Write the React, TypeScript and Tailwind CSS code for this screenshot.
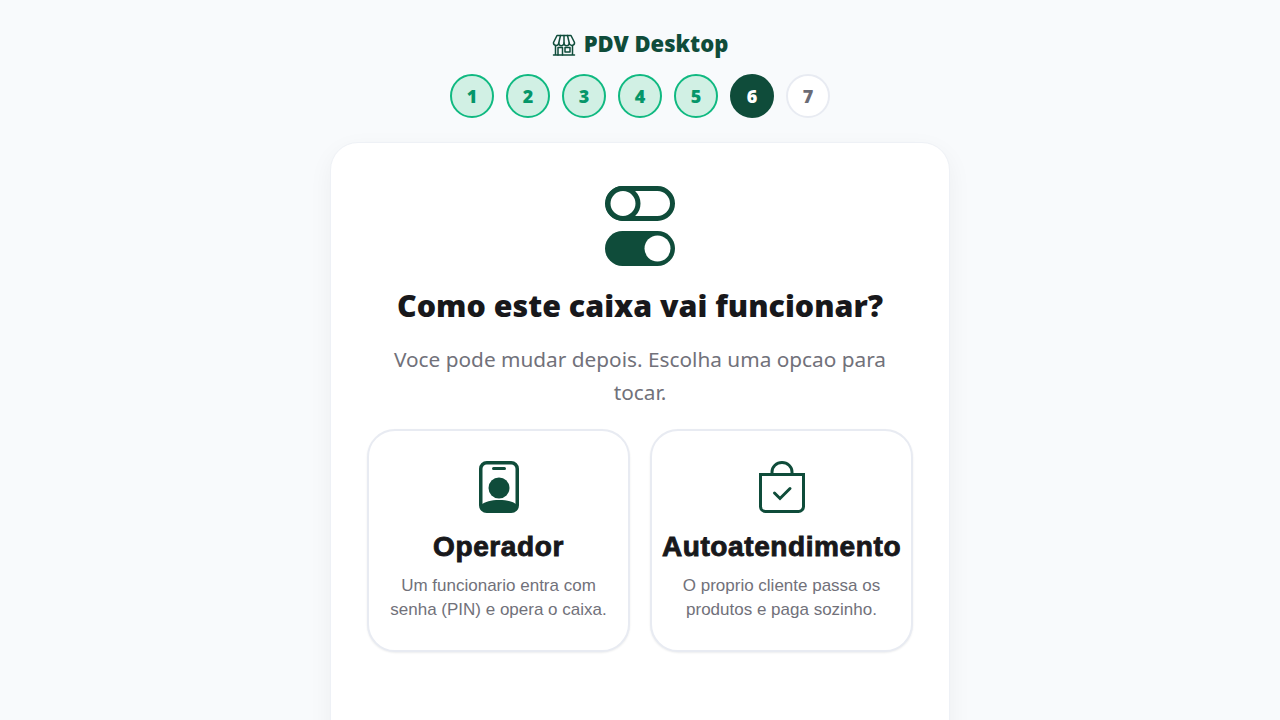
import React from 'react';

const steps = [1, 2, 3, 4, 5, 6, 7];

const StoreIcon = () => (
  <svg width="24" height="24" viewBox="0 0 24 24" fill="none" stroke="#0f4c3a" strokeWidth="1.500" strokeLinejoin="round" strokeLinecap="round">
    <path d="M5 2.500h14l3.500 7a2.600 2.600 0 0 1-5.250.5a2.600 2.600 0 0 1-5.250 0a2.600 2.600 0 0 1-5.250 0a2.600 2.600 0 0 1-5.250-.5L5 2.500z" />
    <path d="M8.500 2.500L6.750 10M15.500 2.500L17.250 10M12 2.500V10" />
    <path d="M3.500 12.500V22h17v-9.500M1.500 22h21" />
    <path d="M6 22v-7.500h4.500V22M13 14.500h5v4.500h-5z" />
  </svg>
);

const TogglesIcon = () => (
  <svg width="70" height="80" viewBox="0 0 70 80" fill="none">
    <rect x="2.500" y="2.500" width="65" height="30" rx="15" stroke="#0f4c3a" strokeWidth="5" />
    <circle cx="18" cy="17.500" r="15" fill="#fff" stroke="#0f4c3a" strokeWidth="5" />
    <rect x="0" y="45" width="70" height="35" rx="17.500" fill="#0f4c3a" />
    <circle cx="52.500" cy="62.500" r="13" fill="#fff" />
  </svg>
);

const BadgeIcon = () => (
  <svg width="40" height="52" viewBox="0 0 40 52" fill="none">
    <rect x="1.750" y="1.750" width="36.500" height="48.500" rx="6" stroke="#0f4c3a" strokeWidth="3.500" />
    <rect x="13" y="6" width="14" height="3" rx="1.500" fill="#0f4c3a" />
    <circle cx="20" cy="27" r="10.500" fill="#0f4c3a" />
    <path d="M2 44c4-3.500 10-5 18-5s14 1.500 18 5v1a6 6 0 0 1-6 6H8a6 6 0 0 1-6-6z" fill="#0f4c3a" />
  </svg>
);

const BagIcon = () => (
  <svg width="46" height="52" viewBox="0 0 46 52" fill="none" stroke="#0f4c3a" strokeWidth="3" strokeLinecap="round" strokeLinejoin="miter">
    <path d="M1.500 13.500h43v32a5 5 0 0 1-5 5h-33a5 5 0 0 1-5-5z" />
    <path d="M13 13.500v-2.500a10 9.500 0 0 1 20 0v2.500" />
    <path d="M15.500 32l5.500 5.500l10-10" />
  </svg>
);

const cards = [
  {
    title: 'Operador',
    text: 'Um funcionario entra com senha (PIN) e opera o caixa.',
    icon: <BadgeIcon />,
  },
  {
    title: 'Autoatendimento',
    text: 'O proprio cliente passa os produtos e paga sozinho.',
    icon: <BagIcon />,
  },
];

export default function App() {
  return (
    <div className="h-screen overflow-hidden bg-[#f8fafc] flex flex-col items-center pt-[31px] font-['Noto_Sans',sans-serif]">
      <div className="flex items-center gap-2 h-7 shrink-0 text-[#0f4c3a] text-[22px] leading-7 font-black">
        <StoreIcon />
        <span className="-mt-[4px]">PDV Desktop</span>
      </div>

      <div className="flex gap-3 mt-[15px] shrink-0">
        {steps.map((n) => (
          <div
            key={n}
            className={`w-11 h-11 rounded-full flex items-center justify-center text-lg font-black border-2 ${
              n < 6
                ? 'bg-[#d1f0e4] border-[#10b981] text-[#059669]'
                : n === 6
                ? 'bg-[#0f4c3a] border-[#0f4c3a] text-white'
                : 'bg-white border-[#e8ebf2] text-[#6b6b75]'
            }`}
          >
            {n}
          </div>
        ))}
      </div>

      <div className="mt-6 w-[620px] shrink-0 bg-white border border-[#eef1f6] rounded-[28px] shadow-[0_8px_24px_rgba(15,23,42,0.05)] px-[36px] pt-[43px] pb-[120px] flex flex-col items-center">
        <TogglesIcon />
        <h1 className="mt-[19px] text-[30.400px] leading-[42px] font-black text-[#18181b] text-center">
          Como este caixa vai funcionar?
        </h1>
        <p className="mt-[16px] w-[520px] text-[20.800px] leading-[33px] text-[#71717a] text-center">
          Voce pode mudar depois. Escolha uma opcao para tocar.
        </p>
        <div className="mt-[20px] w-full grid grid-cols-2 gap-5">
          {cards.map((c) => (
            <div
              key={c.title}
              className="h-[223px] bg-white border-2 border-[#e8ebf2] rounded-[28px] shadow-[0_1px_2px_rgba(15,23,42,0.08)] pt-[30px] px-2 flex flex-col items-center text-center font-['Liberation_Sans',sans-serif]"
            >
              {c.icon}
              <h2 className="mt-[16px] text-[28px] leading-9 font-black tracking-[0.6px] text-[#18181b] [-webkit-text-stroke:0.9px_#18181b]">
                {c.title}
              </h2>
              <p className="mt-[9px] w-[226px] text-[17px] leading-6 text-[#71717a]">{c.text}</p>
            </div>
          ))}
        </div>
      </div>
    </div>
  );
}
